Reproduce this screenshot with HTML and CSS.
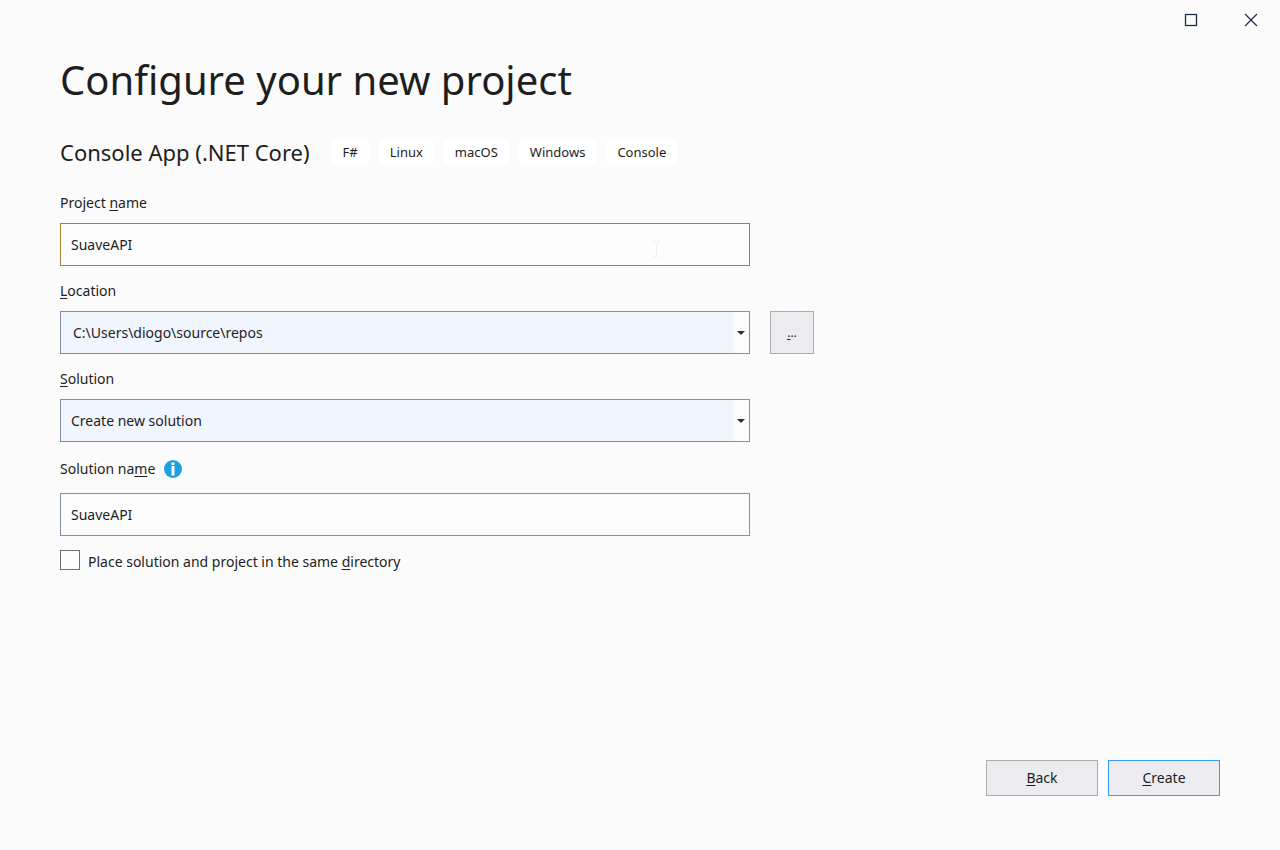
FILE: index.html
```html
<!DOCTYPE html>
<html lang="en">
<head>
    <meta charset="UTF-8">
    <meta name="viewport" content="width=device-width, initial-scale=1.0">
    <title>Configure your new project</title>
    <link rel="stylesheet" href="styles.css">
</head>
<body>
    <header class="title-bar">
        <button type="button" class="window-button" aria-label="Maximize">
            <svg width="14" height="14" viewBox="0 0 14 14"><rect x="1.5" y="1.5" width="11" height="11" fill="none" stroke="#1f2a44" stroke-width="1.3"/></svg>
        </button>
        <button type="button" class="window-button" aria-label="Close">
            <svg width="14" height="14" viewBox="0 0 14 14"><path d="M1 1L13 13M13 1L1 13" stroke="#1f2a44" stroke-width="1.2"/></svg>
        </button>
    </header>
    <form class="dialog">
        <main>
            <h1>Configure your new project</h1>
            <div class="template">
                <h2>Console App (.NET Core)</h2>
                <ul class="tags">
                    <li>F#</li>
                    <li>Linux</li>
                    <li>macOS</li>
                    <li>Windows</li>
                    <li>Console</li>
                </ul>
            </div>
            <div class="field">
                <label for="projectName">Project <u>n</u>ame</label>
                <div class="control">
                    <input type="text" id="projectName" class="box focused" value="SuaveAPI">
                    <svg class="text-cursor" width="7" height="16" viewBox="0 0 7 16"><path d="M0 .5H3M4 .5H7M3.500 1V15M0 15.500H3M4 15.500H7" fill="none" stroke="#f0f0f0"/></svg>
                </div>
            </div>
            <div class="field">
                <label for="location"><u>L</u>ocation</label>
                <div class="field-row">
                    <div class="control">
                        <select id="location" class="box editable">
                            <option>C:\Users\diogo\source\repos</option>
                        </select>
                        <span class="arrow"><svg width="8" height="4" viewBox="0 0 8 4"><path d="M0 0H8L4 4Z" fill="#1f2a44"/></svg></span>
                    </div>
                    <button type="button" class="button browse" aria-label="Browse"><u>.</u>..</button>
                </div>
            </div>
            <div class="field">
                <label for="solution"><u>S</u>olution</label>
                <div class="control">
                    <select id="solution" class="box">
                        <option>Create new solution</option>
                    </select>
                    <span class="arrow"><svg width="8" height="4" viewBox="0 0 8 4"><path d="M0 0H8L4 4Z" fill="#1f2a44"/></svg></span>
                </div>
            </div>
            <div class="field solution-name">
                <div class="label-row">
                    <label for="solutionName">Solution na<u>m</u>e</label>
                    <svg width="18" height="18" viewBox="0 0 18 18"><circle cx="9" cy="9" r="9" fill="#1ba1e2"/><path d="M7.500 2.500H10.500V5H7.500ZM7.500 6H10.500V15.500H7.500Z" fill="#fff"/></svg>
                </div>
                <div class="control">
                    <input type="text" id="solutionName" class="box" value="SuaveAPI">
                </div>
            </div>
            <div class="check-row">
                <input type="checkbox" id="sameDirectory">
                <label for="sameDirectory">Place solution and project in the same <u>d</u>irectory</label>
            </div>
        </main>
        <footer>
            <button type="button" class="button"><u>B</u>ack</button>
            <button type="submit" class="button primary"><u>C</u>reate</button>
        </footer>
    </form>
</body>
</html>
```

FILE: styles.css
```css
* {
    box-sizing: border-box;
}
body {
    display: flex;
    flex-direction: column;
    min-height: 100vh;
    margin: 0;
    background-color: #fbfbfb;
    color: #1e1e1e;
    font-family: "Segoe UI", "Noto Sans", sans-serif;
    font-size: 14px;
    line-height: 20px;
}
u {
    text-underline-offset: 2px;
}
.title-bar {
    display: flex;
    justify-content: flex-end;
    height: 40px;
}
.window-button {
    display: flex;
    align-items: center;
    justify-content: center;
    width: 60px;
    padding: 0 0 0 2px;
    border: 0;
    background: none;
}
.dialog {
    display: flex;
    flex: 1;
    flex-direction: column;
    justify-content: space-between;
    padding: 12px 60px 54px;
}
h1 {
    margin: 0;
    font-size: 40px;
    font-weight: 400;
    line-height: 56px;
}
.template {
    display: flex;
    align-items: center;
    gap: 22px;
    margin: 28px 0 25px;
}
h2 {
    margin: 0;
    font-size: 22px;
    font-weight: 400;
    line-height: 32px;
}
.tags {
    display: flex;
    gap: 10px;
    margin: 0;
    padding: 0;
    list-style: none;
    font-size: 13px;
}
.tags li {
    padding: 3px 11px;
    border-radius: 5px;
    background-color: #fff;
}
.field {
    max-width: 690px;
    margin-bottom: 15px;
}
.field > label {
    display: block;
    margin-bottom: 10px;
}
.control {
    position: relative;
    flex: none;
    width: 100%;
}
.field-row {
    display: flex;
    gap: 20px;
}
.box {
    display: block;
    width: 100%;
    height: 43px;
    padding: 0 10px;
    border: 1px solid #838fa8;
    border-radius: 0;
    outline: 0;
    background-color: #fcfcfc;
    color: #1e1e1e;
    font: inherit;
    appearance: none;
}
.focused {
    border-color: #a9802f;
}
select.box {
    background-color: #f1f5fe;
}
.editable {
    padding-left: 12px;
}
.arrow {
    position: absolute;
    top: 1px;
    right: 1px;
    bottom: 1px;
    display: flex;
    align-items: center;
    justify-content: center;
    width: 16px;
    background-color: #fcfcfc;
    pointer-events: none;
}
.text-cursor {
    position: absolute;
    top: 18px;
    right: 90px;
    pointer-events: none;
}
.label-row {
    display: flex;
    align-items: center;
    gap: 9px;
    margin-bottom: 14px;
}
.solution-name {
    margin-bottom: 14px;
    padding-top: 2px;
}
.check-row {
    display: flex;
    gap: 8px;
}
.check-row input {
    width: 20px;
    height: 20px;
    margin: 0;
    border: 1px solid #717171;
    background-color: #fefefe;
    appearance: none;
}
.check-row input:checked {
    background-color: #1ba1e2;
}
.check-row label {
    padding-top: 2px;
}
.button {
    width: 112px;
    height: 36px;
    padding: 0;
    border: 1px solid #acacac;
    background-color: #ececf0;
    color: #1e1e1e;
    font: inherit;
}
.browse {
    flex: none;
    width: 44px;
    height: 43px;
    font-size: 12px;
}
.primary {
    border-color: #3399ff;
}
footer {
    display: flex;
    justify-content: flex-end;
    gap: 10px;
}
```
